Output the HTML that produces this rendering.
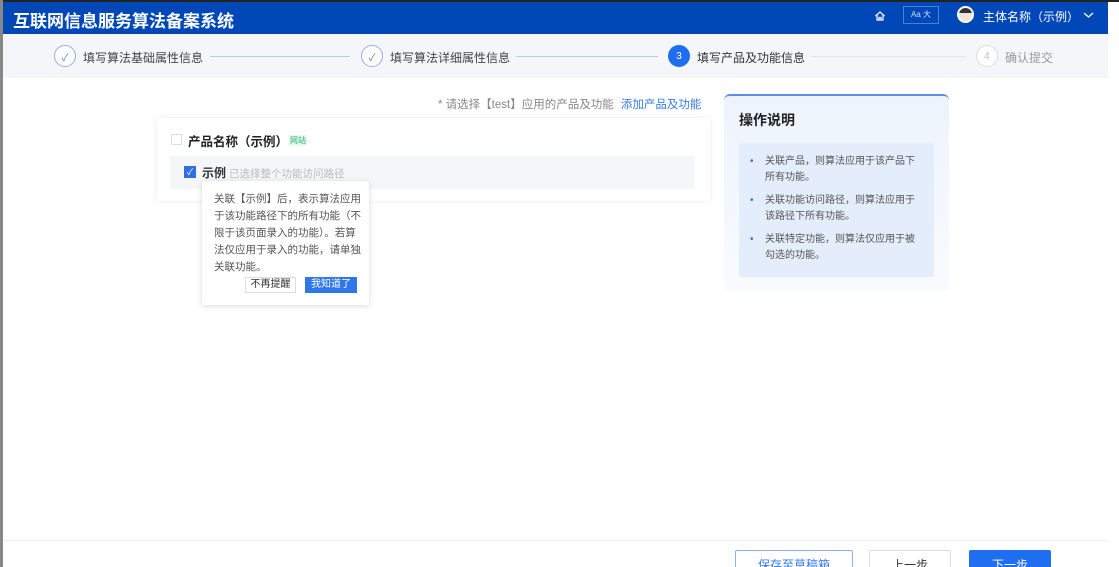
<!DOCTYPE html>
<html><head><meta charset="utf-8"><style>
*{margin:0;padding:0;box-sizing:border-box}
html,body{width:1119px;height:567px;overflow:hidden}
body{background:#fff;font-family:"Liberation Sans","Noto Sans CJK SC",sans-serif;position:relative}
.abs{position:absolute}
.hdr{left:3px;top:2px;width:1105px;height:32px;background:#0047b8;color:#fff}
.steps{left:3px;top:34px;width:1105px;height:44px;background:#f4f6fa}
.circ{position:absolute;width:22px;height:22px;border-radius:50%;border:1px solid #8fb0e8;top:11px;display:flex;align-items:center;justify-content:center;font-size:10px}
.st{position:absolute;top:15px;font-size:12px;color:#444}
.ln{position:absolute;top:22px;height:1px;background:#b8cce8}
</style></head><body>
<div class="abs" style="left:0;top:0;width:1119px;height:2px;background:#222"></div>
<div class="abs" style="left:0;top:0;width:3px;height:567px;background:#888"></div>
<div class="abs hdr">
 <div class="abs" style="left:10px;top:5px;font-size:17px;font-weight:bold">互联网信息服务算法备案系统</div>
 <svg class="abs" style="left:871px;top:8px" width="12" height="12" viewBox="0 0 12 12"><path d="M1.5 6 L6 2 L10.5 6 M3 5 V10 H9 V5 M5 10 V7.5 H7 V10" stroke="#fff" stroke-width="1.2" fill="none"/></svg>
 <div class="abs" style="left:900px;top:4px;width:36px;height:18px;border:1px solid #4d7fd6;font-size:8px;line-height:16px;text-align:center;color:#cfe0ff">Aa 大</div>
 <div class="abs" style="left:954px;top:4px;width:17px;height:17px;border-radius:50%;background:#f1e4d8;border:2px solid #fff;overflow:hidden"><div style="width:13px;height:5px;background:#333;border-radius:6px 6px 0 0"></div></div>
 <div class="abs" style="left:980px;top:6px;font-size:12px">主体名称（示例）</div>
 <svg class="abs" style="left:1080px;top:9px" width="11" height="8" viewBox="0 0 11 8"><path d="M1 2 L5.5 6 L10 2" stroke="#fff" stroke-width="1.3" fill="none"/></svg>
</div>
<div class="abs steps">
 <div class="circ" style="left:51px;color:#4a7fe0;background:#fff">✓</div><div class="st" style="left:80px">填写算法基础属性信息</div>
 <div class="ln" style="left:207px;width:140px"></div>
 <div class="circ" style="left:358px;color:#4a7fe0;background:#fff">✓</div><div class="st" style="left:387px">填写算法详细属性信息</div>
 <div class="ln" style="left:513px;width:142px"></div>
 <div class="circ" style="left:665px;background:#1f6ef0;border-color:#1f6ef0;color:#fff">3</div><div class="st" style="left:694px;color:#333">填写产品及功能信息</div>
 <div class="ln" style="left:808px;width:155px;background:#e2e6ec"></div>
 <div class="circ" style="left:973px;border-color:#ddd;color:#bbb;background:#fff">4</div><div class="st" style="left:1002px;color:#999">确认提交</div>
</div>
<div class="abs" style="left:438px;top:96px;font-size:11.5px;color:#888">* 请选择【test】应用的产品及功能 <span style="color:#3a7be8;margin-left:4px">添加产品及功能</span></div>
<div class="abs" style="left:157px;top:118px;width:553px;height:83px;background:#fff;box-shadow:0 0 6px rgba(0,0,0,.08)"></div>
<div class="abs" style="left:171px;top:134px;width:11px;height:11px;border:1px solid #ddd"></div>
<div class="abs" style="left:188px;top:131px;font-size:12.5px;font-weight:bold;color:#222">产品名称（示例）</div>
<div class="abs" style="left:289px;top:135px;font-size:8px;color:#2bb673;background:#e8f8ef;padding:0 1px">网站</div>
<div class="abs" style="left:170px;top:156px;width:525px;height:33px;background:#f5f6f8"></div>
<div class="abs" style="left:184px;top:166px;width:12px;height:12px;background:#2f6fe6;color:#fff;font-size:9px;line-height:12px;text-align:center">✓</div>
<div class="abs" style="left:202px;top:164px;font-size:12px;font-weight:bold;color:#333">示例</div>
<div class="abs" style="left:229px;top:166px;font-size:10.5px;color:#bbb">已选择整个功能访问路径</div>
<div class="abs" style="left:202px;top:181px;width:167px;height:124px;background:#fff;box-shadow:0 1px 6px rgba(0,0,0,.15);border-radius:2px"></div>
<div class="abs" style="left:214px;top:191px;width:150px;font-size:10.5px;line-height:17px;color:#555">关联【示例】后，表示算法应用于该功能路径下的所有功能（不限于该页面录入的功能）。若算法仅应用于录入的功能，请单独关联功能。</div>
<div class="abs" style="left:245px;top:277px;width:51px;height:16px;border:1px solid #ddd;font-size:10px;line-height:14px;text-align:center;color:#333">不再提醒</div>
<div class="abs" style="left:305px;top:277px;width:52px;height:16px;background:#2f76e8;font-size:10px;line-height:16px;text-align:center;color:#fff">我知道了</div>
<div class="abs" style="left:724px;top:94px;width:225px;height:197px;border-radius:6px;border-top:2px solid #5a8ee8;background:linear-gradient(#edf3fd,#f9fbff);"></div>
<div class="abs" style="left:739px;top:110px;font-size:14px;font-weight:bold;color:#222">操作说明</div>
<div class="abs" style="left:739px;top:143px;width:195px;height:134px;background:#e4edfb;border-radius:2px"></div>
<div class="abs" style="left:750px;top:154px;width:168px;font-size:10px;line-height:16px;color:#555">
 <div style="padding-left:15px;position:relative;margin-bottom:7px"><span style="position:absolute;left:0;color:#2f6fe6">•</span>关联产品，则算法应用于该产品下所有功能。</div>
 <div style="padding-left:15px;position:relative;margin-bottom:7px"><span style="position:absolute;left:0;color:#2f6fe6">•</span>关联功能访问路径，则算法应用于该路径下所有功能。</div>
 <div style="padding-left:15px;position:relative"><span style="position:absolute;left:0;color:#2f6fe6">•</span>关联特定功能，则算法仅应用于被勾选的功能。</div>
</div>
<div class="abs" style="left:3px;top:540px;width:1105px;height:1px;background:#eee"></div>
<div class="abs" style="left:735px;top:550px;width:118px;height:30px;border:1px solid #8fb0e8;border-radius:2px;font-size:12px;color:#3a7be8;text-align:center;line-height:28px">保存至草稿箱</div>
<div class="abs" style="left:869px;top:550px;width:82px;height:30px;border:1px solid #ddd;border-radius:2px;font-size:12px;color:#333;text-align:center;line-height:28px">上一步</div>
<div class="abs" style="left:969px;top:550px;width:82px;height:30px;background:#1f6ef0;border-radius:2px;font-size:12px;color:#fff;text-align:center;line-height:30px">下一步</div>
</body></html>
